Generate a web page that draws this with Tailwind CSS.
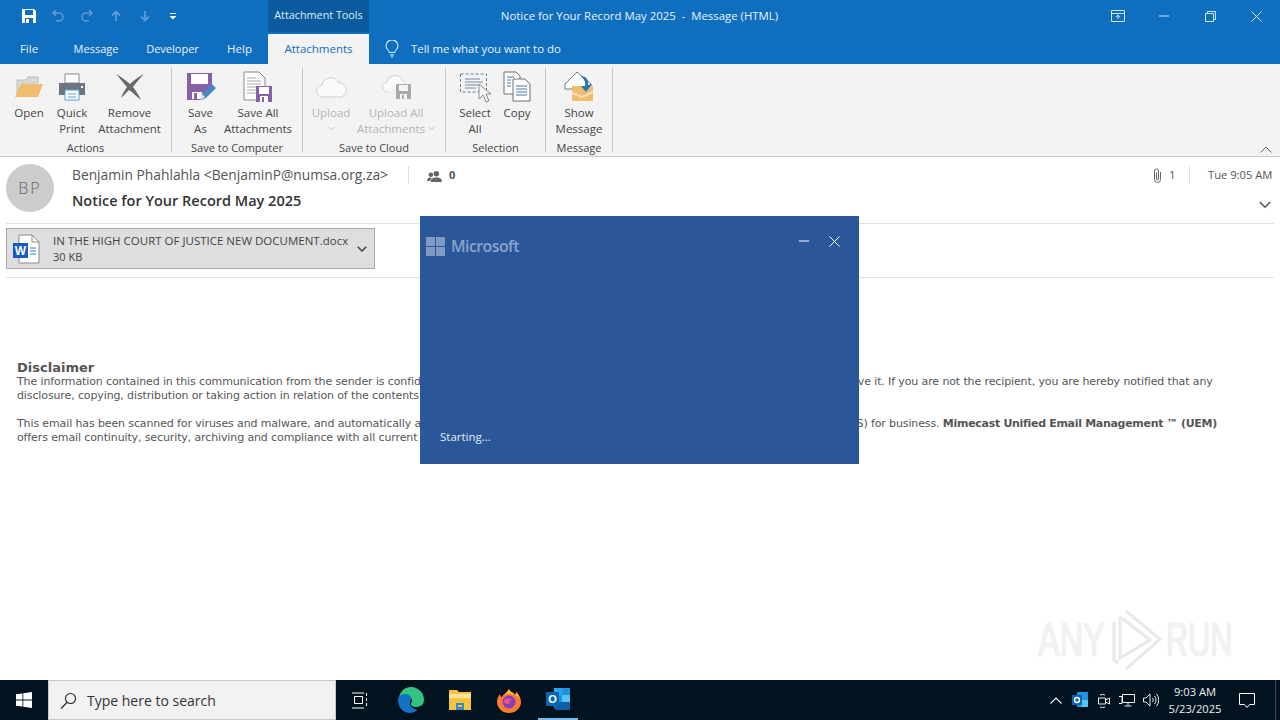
<!DOCTYPE html>
<html lang="en">
<head>
    <meta charset="UTF-8">
    <title>Notice for Your Record May 2025 - Message (HTML)</title>
    <script src="https://cdn.jsdelivr.net/npm/@tailwindcss/browser@4"></script>
</head>
<body class="relative w-[1280px] h-[720px] overflow-hidden bg-white flex flex-col font-['Open_Sans',sans-serif] text-[11.500px] text-[#444]">

    <!-- title bar -->
    <div class="h-[64px] bg-[#106ebe] text-white shrink-0">
        <div class="h-[32px] flex items-center">
            <div class="flex items-center w-[268px] pl-[21px]">
                <svg class="w-[16px] h-[16px]" viewBox="0 0 16 16"><path d="M1 1h12l2 2v12H1z" fill="#fff"/><path d="M4 2h8v5H4z" fill="#106ebe"/><path d="M4 10h8v5H4z" fill="#106ebe"/><path d="M5 11h3v4H5z" fill="#fff"/></svg>
                <svg class="w-[14px] h-[14px] ml-[14px]" viewBox="0 0 14 14" fill="none" stroke="#5a9bd8" stroke-width="1.6"><path d="M5 1 2 4l3 3M2 4h6a4 4 0 0 1 0 8H5"/></svg>
                <svg class="w-[14px] h-[14px] ml-[15px]" viewBox="0 0 14 14" fill="none" stroke="#5a9bd8" stroke-width="1.6"><path d="m9 1 3 3-3 3M12 4H6a4 4 0 0 0 0 8h3"/></svg>
                <svg class="w-[12px] h-[12px] ml-[16px]" viewBox="0 0 12 12" fill="none" stroke="#5a9bd8" stroke-width="1.8"><path d="M6 11V2M2 5.5 6 1.5l4 4"/></svg>
                <svg class="w-[12px] h-[12px] ml-[17px]" viewBox="0 0 12 12" fill="none" stroke="#5a9bd8" stroke-width="1.8"><path d="M6 1v9M2 6.5l4 4 4-4"/></svg>
                <svg class="w-[8px] h-[8px] ml-[18px]" viewBox="0 0 8 8" fill="#fff"><path d="M1 1h6v1H1zM0.5 4h7L4 7.5z"/></svg>
            </div>
            <div class="w-[101px] h-[34px] -mt-[2px] bg-[#0b5a9e] flex items-center justify-center text-[10.800px] text-[#dcecf9]">Attachment Tools</div>
            <div class="w-[541px] text-center text-[11.400px] text-[#e8f2fb] whitespace-pre">Notice for Your Record May 2025  -  Message (HTML)</div>
            <div class="flex-1 flex items-center">
                <svg class="w-[14px] h-[12px] ml-[201px]" viewBox="0 0 14 12" fill="none" stroke="#cfe6fa"><path d="M.5.5h13v11H.5zM.5 3.500h13M7 9V5M5 7l2-2 2 2"/></svg>
                <svg class="w-[10px] h-[2px] ml-[34px]" viewBox="0 0 10 2"><path d="M0 1h10" stroke="#cfe6fa"/></svg>
                <svg class="w-[11px] h-[11px] ml-[36px]" viewBox="0 0 11 11" fill="none" stroke="#cfe6fa"><path d="M.5 2.500h8v8h-8zM2.500 2.500v-2h8v8h-2"/></svg>
                <svg class="w-[11px] h-[11px] ml-[35px]" viewBox="0 0 11 11" fill="none" stroke="#cfe6fa"><path d="m.5.5 10 10M10.500.5l-10 10"/></svg>
            </div>
        </div>
        <div class="h-[32px] pt-[1px] flex items-center">
            <div class="w-[58px] text-center text-[#e8f2fb]">File</div>
            <div class="w-[76px] mt-[1px] text-center text-[#e8f2fb] text-[11px]">Message</div>
            <div class="w-[77px] mt-[1px] text-center text-[#e8f2fb] text-[11px]">Developer</div>
            <div class="w-[57px] text-center text-[#e8f2fb]">Help</div>
            <div class="w-[101px] h-[30px] self-end bg-[#f3f3f3] flex items-center justify-center text-[#106ebe]">Attachments</div>
            <svg class="w-[14px] h-[18px] ml-[16px]" viewBox="0 0 14 18" fill="none" stroke="#dcecf9" stroke-width="1.1"><path d="M4.500 12.500C4 10 1 9 1 6a6 6 0 0 1 12 0c0 3-3 4-3.500 6.500zM5 15h4M6 17h2"/></svg>
            <div class="ml-[12px] text-[11.400px] text-[#e8f2fb]">Tell me what you want to do</div>
        </div>
    </div>

    <!-- ribbon -->
    <div class="relative h-[93px] bg-[#f3f3f3] border-b border-[#c8c8c8] pt-[4px] flex shrink-0 leading-[16px]">
        <div class="w-[172px] h-[84px] border-r border-[#c6c6c6] flex flex-col">
            <div class="h-[72px] flex pl-[8px]">
                <div class="w-[42px] flex flex-col items-center">
                    <div class="h-[37px] flex items-center"><svg class="w-[30px] h-[24px]" viewBox="0 0 30 24"><path d="M3 21V5h9l2-3h10v6H8z" fill="#d9d9d9" stroke="#bcbcbc"/><path d="M1 22 7 9h22l-5 13z" fill="#f0bd6e"/></svg></div>
                    <div>Open</div>
                </div>
                <div class="w-[44px] flex flex-col items-center">
                    <div class="h-[37px] flex items-center"><svg class="w-[30px] h-[28px]" viewBox="0 0 30 28"><path d="M8 1h14v9H8z" fill="#fff" stroke="#8a8a8a"/><path d="M2 10h26v12H2z" fill="#6d7680"/><path d="M8 17h14v10H8z" fill="#fff" stroke="#5b9bd5"/><path d="M11 21h8M11 24h8" stroke="#5b9bd5"/><path d="M24 13h2v2h-2z" fill="#fff"/></svg></div>
                    <div>Quick</div><div>Print</div>
                </div>
                <div class="w-[71px] flex flex-col items-center">
                    <div class="h-[37px] flex items-center"><svg class="w-[30px] h-[28px]" viewBox="0 0 30 28"><path d="M1 1c6 3 10 7 14 10 4-4 8-7 14-10-4 4-8 9-11 13 3 4 6 8 8 13-5-4-9-8-12-10-3 3-6 6-8 8 1-4 4-8 6-11C8 10 5 5 1 1z" fill="#6a6a6a"/></svg></div>
                    <div>Remove</div><div>Attachment</div>
                </div>
            </div>
            <div class="h-[12px] mt-[3px] text-center text-[11px]">Actions</div>
        </div>

        <div class="w-[131px] h-[84px] border-r border-[#c6c6c6] flex flex-col">
            <div class="h-[72px] flex pl-[8px]">
                <div class="w-[41px] flex flex-col items-center">
                    <div class="h-[37px] flex items-center"><svg class="w-[30px] h-[30px]" viewBox="0 0 30 30"><path d="M1 1h25v16l-9 10-3 1H1z" fill="#8661a8"/><path d="M5 2h17v10H5z" fill="#fff"/><path d="M6 20h10v7H6z" fill="#fff"/><path d="M8 21h3v6H8z" fill="#8661a8"/><path d="m14 28 2-6 10-10 4 4-10 10z" fill="#4a86c5"/><path d="m14 28 2-6 3 3z" fill="#e6e6e6"/></svg></div>
                    <div>Save</div><div>As</div>
                </div>
                <div class="w-[76px] ml-[-1px] flex flex-col items-center">
                    <div class="h-[37px] flex items-center"><svg class="w-[30px] h-[32px]" viewBox="0 0 30 32"><path d="M1 1h15l6 6v22H1z" fill="#fff" stroke="#8a8a8a"/><path d="M4 7h9M4 10h14M4 13h14M4 16h14M4 19h10M4 22h10" stroke="#a8a8a8"/><path d="M13 15h16v16H13z" fill="#8661a8"/><path d="M16 16h10v7H16zM17 25h8v6h-8z" fill="#fff"/><path d="M19 26h2v5h-2z" fill="#8661a8"/></svg></div>
                    <div>Save All</div><div>Attachments</div>
                </div>
            </div>
            <div class="h-[12px] mt-[3px] text-center text-[11px]">Save to Computer</div>
        </div>

        <div class="w-[143px] h-[84px] border-r border-[#c6c6c6] flex flex-col">
            <div class="h-[72px] flex pl-[4px] text-[#b4b4b4]">
                <div class="w-[48px] flex flex-col items-center">
                    <div class="h-[37px] flex items-center"><svg class="w-[32px] h-[24px]" viewBox="0 0 32 24" fill="#fafafa" stroke="#cfcfcf"><path d="M8 22a6 6 0 0 1-1-12 9 9 0 0 1 17-2 7 7 0 0 1 1 14z"/></svg></div>
                    <div>Upload</div>
                    <svg class="w-[7px] h-[16px]" viewBox="0 0 7 16" fill="none" stroke="#c0c0c0"><path d="m.5 6 3 3 3-3"/></svg>
                </div>
                <div class="w-[82px] flex flex-col items-center">
                    <div class="h-[37px] flex items-center"><svg class="w-[31px] h-[27px]" viewBox="0 0 31 27"><path d="M7 19a5 5 0 0 1-1-10 8 8 0 0 1 15-2 6 6 0 0 1 3 3" fill="#fafafa" stroke="#cfcfcf"/><path d="M15 11h15v15H15z" fill="#a9a9a9"/><path d="M18 12h9v6h-9zM19 21h7v5h-7z" fill="#f3f3f3"/><path d="M21 22h2v4h-2z" fill="#a9a9a9"/></svg></div>
                    <div>Upload All</div>
                    <div class="flex items-center gap-[3px]">Attachments<svg class="w-[7px] h-[16px]" viewBox="0 0 7 16" fill="none" stroke="#c0c0c0"><path d="m.5 6 3 3 3-3"/></svg></div>
                </div>
            </div>
            <div class="h-[12px] mt-[3px] text-center text-[11px]">Save to Cloud</div>
        </div>

        <div class="w-[100px] h-[84px] border-r border-[#c6c6c6] flex flex-col">
            <div class="h-[72px] flex pl-[7px]">
                <div class="w-[44px] flex flex-col items-center">
                    <div class="h-[37px] flex items-center"><svg class="w-[32px] h-[32px]" viewBox="0 0 32 32" fill="none"><path d="M1.500 3h26v18h-26z" stroke="#5b7f9e" stroke-dasharray="3 2"/><path d="M6 8h15M6 11h18M6 14h14M6 17h11" stroke="#6f8ca5"/><path d="M20 13v15l4-4 3 7 3-1-3-7h5z" fill="#f6f6f6" stroke="#8c8c8c"/></svg></div>
                    <div>Select</div><div>All</div>
                </div>
                <div class="w-[40px] flex flex-col items-center">
                    <div class="h-[37px] flex items-center"><svg class="w-[28px] h-[31px]" viewBox="0 0 28 31" fill="#fff" stroke="#6d6d6d"><path d="M1 1h12l4 4v18H1z"/><path d="M10 8h12l5 5v17H10z"/><path d="M4 6h7M4 9h4M4 12h4M4 15h4M13 15h11M13 18h11M13 21h11M13 24h11" stroke="#3d7ab3"/></svg></div>
                    <div>Copy</div>
                </div>
            </div>
            <div class="h-[12px] mt-[3px] text-center text-[11px]">Selection</div>
        </div>

        <div class="w-[67px] h-[84px] border-r border-[#c6c6c6] flex flex-col">
            <div class="h-[72px] flex pl-[3px]">
                <div class="w-[60px] flex flex-col items-center">
                    <div class="h-[37px] flex items-center"><svg class="w-[31px] h-[31px]" viewBox="0 0 31 31"><path d="M1 13 13 1l14 12v5H1z" fill="#fff" stroke="#777"/><path d="M8 15h21v15H8z" fill="#f0bd6e"/><path d="m8 22 10 4 11-5" fill="none" stroke="#fae0b4" stroke-width="2"/><path d="M17 5c5 0 8 4 7 9l4-1-6 8-5-6 4 0c1-4-1-7-4-10z" fill="#2673b8"/></svg></div>
                    <div>Show</div><div>Message</div>
                </div>
            </div>
            <div class="h-[12px] mt-[3px] text-center text-[11px]">Message</div>
        </div>

        <svg class="absolute right-[8px] bottom-[3px] w-[12px] h-[7px]" viewBox="0 0 12 7" fill="none" stroke="#666"><path d="m.5 6.500 5.500-5.500 5.500 5.500"/></svg>
    </div>

    <!-- message header -->
    <div class="h-[67px] mx-[6px] border-b border-[#e1e1e1] flex shrink-0">
        <div class="w-[48px] h-[48px] mt-[7px] rounded-full bg-[#cccccc] flex items-center justify-center text-[16px] font-light text-[#666] tracking-[2px]">BP</div>
        <div class="ml-[18px] flex-1 flex flex-col">
            <div class="flex items-center h-[20px] mt-[8px]">
                <div class="w-[336px] text-[13.800px] text-[#555] whitespace-nowrap">Benjamin Phahlahla &lt;BenjaminP@numsa.org.za&gt;</div>
                <div class="w-px h-[18px] bg-[#e1e1e1]"></div>
                <svg class="w-[15px] h-[11px] ml-[18px] mt-[2px]" viewBox="0 0 16 12" fill="#666"><circle cx="10" cy="3" r="3"/><path d="M4 12c0-4 2-5 6-5s6 1 6 5z"/><circle cx="4" cy="4" r="2.500"/><path d="M0 11c0-3 1-4 4-4l1 .5C4 8.500 3.500 10 3.500 11z"/></svg>
                <div class="ml-[7px] mt-[1px] text-[11px] font-bold text-[#555]">0</div>
                <div class="flex-1"></div>
                <svg class="w-[9px] h-[15px]" viewBox="0 0 9 15" fill="none" stroke="#666"><path d="M7.500 4v7.500a3 3 0 0 1-6 0V3a2 2 0 0 1 4 0v8a1 1 0 0 1-2 0V4.500"/></svg>
                <div class="ml-[7px] w-[20px] text-[11.500px] text-[#555]">1</div>
                <div class="w-px h-[18px] bg-[#e1e1e1]"></div>
                <div class="ml-[18px] w-[66px] text-[11.200px] text-[#555] whitespace-nowrap">Tue 9:05 AM</div>
            </div>
            <div class="flex items-center h-[24px] mt-[4px]">
                <div class="flex-1 text-[14.500px] font-semibold text-[#333]">Notice for Your Record May 2025</div>
                <svg class="w-[12px] h-[8px] mr-[3px] mt-[7px]" viewBox="0 0 12 8" fill="none" stroke="#555" stroke-width="1.600"><path d="m.8 1 5.200 5.200 5.200-5.200"/></svg>
            </div>
        </div>
    </div>

    <!-- attachment -->
    <div class="h-[54px] mx-[6px] border-b border-[#e1e1e1] pt-[4px] shrink-0">
        <div class="w-[369px] h-[41px] bg-[#dedede] border border-[#a9a9a9] flex items-center">
            <svg class="w-[28px] h-[30px] ml-[5px]" viewBox="0 0 28 30"><path d="M7 1h13l7 7v21H7z" fill="#fff" stroke="#8a8a8a"/><path d="M20 1v7h7" fill="none" stroke="#8a8a8a"/><path d="M18 14h6M18 17h6M18 20h6" stroke="#2b7cd3" stroke-width="1.200"/><path d="M1 9h15v15H1z" fill="#185abd"/><text x="8.500" y="21" text-anchor="middle" font-size="12" font-weight="700" fill="#fff" font-family="Liberation Sans">W</text></svg>
            <div class="ml-[13px] flex-1 leading-[16px] text-[11.500px] text-[#444]">
                <div class="whitespace-nowrap">IN THE HIGH COURT OF JUSTICE NEW DOCUMENT.docx</div>
                <div class="text-[11px]">30 KB</div>
            </div>
            <svg class="w-[10px] h-[6px] mr-[7px]" viewBox="0 0 10 6" fill="none" stroke="#444" stroke-width="1.500"><path d="m.8.8 4.200 4.200 4.200-4.200"/></svg>
        </div>
    </div>

    <!-- message body -->
    <div class="flex-1 pl-[17px] pt-[82px] font-['DejaVu_Sans',sans-serif] text-[11px] leading-[14px] tracking-[-0.12px] text-[#555] whitespace-nowrap">
        <div class="text-[13px] font-bold leading-[15px] tracking-normal text-[#555]">Disclaimer</div>
        <div>The information contained in this communication from the sender is confidential. It is intended solely for use by the recipient and others authorized to receive it. If you are not the recipient, you are hereby notified that any</div>
        <div>disclosure, copying, distribution or taking action in relation of the contents of this information is strictly prohibited and may be unlawful.</div>
        <div class="mt-[14px]">This email has been scanned for viruses and malware, and automatically archived by Mimecast SA (Pty) Ltd, an innovator in the Software as a Service (SaaS) for business. <span class="font-bold tracking-[-0.3px]">Mimecast Unified Email Management ™ (UEM)</span></div>
        <div>offers email continuity, security, archiving and compliance with all current</div>
    </div>

    <!-- taskbar -->
    <div class="h-[40px] bg-[#01131f] flex items-center shrink-0 text-white">
        <div class="w-[48px] flex justify-center">
            <svg class="w-[16px] h-[16px]" viewBox="0 0 16 16" fill="#fff"><path d="M0 2.300 6.500 1.400v6.200H0zM7.300 1.300 16 0v7.600H7.300zM0 8.400h6.500v6.200L0 13.700zM7.300 8.400H16V16l-8.700-1.300z"/></svg>
        </div>
        <div class="w-[288px] h-[40px] bg-[#f2f2f2] border border-[#c9c9c9] flex items-center">
            <svg class="w-[17px] h-[17px] ml-[11px]" viewBox="0 0 17 17" fill="none" stroke="#222" stroke-width="1.100"><circle cx="10.500" cy="6.500" r="5"/><path d="M7 10.500 1 16.500"/></svg>
            <div class="ml-[10px] text-[14px] text-[#333]">Type here to search</div>
        </div>
        <div class="w-[48px] flex justify-center">
            <svg class="w-[16px] h-[17px]" viewBox="0 0 16 17" fill="none" stroke="#fff"><path d="M0 1h12M0 16h12M2.500 4.500h8v7h-8zM14.500 1v3M14.500 6v3M14.500 11v3"/></svg>
        </div>
        <div class="w-[50px] ml-[2px] flex justify-center">
            <svg class="w-[26px] h-[26px]" viewBox="0 0 26 26"><path d="M13 0a13 13 0 0 1 13 13c0 5-4 7-8 7-3 0-5-1-5-3 0-1 1-2 1-3.500 0-3-3-4.500-6-4.500-4 0-8 2-8 6C1 5 6 0 13 0z" fill="#33c481"/><path d="M0 13c0-4 4-6 7-6 4 0 6 2 6 5 0 2-1 2-1 4 0 3 2 5 5 6 2 .5 3 1 1 2-2 1-3 2-6 2C5 26 0 20 0 13z" fill="#1272c4"/></svg>
        </div>
        <div class="w-[48px] flex justify-center">
            <svg class="w-[22px] h-[20px]" viewBox="0 0 22 20"><path d="M0 0h8l2 2h12v18H0z" fill="#f5c542"/><path d="M0 4h22v4H0z" fill="#f9e29a"/><path d="M7 13h8v7H7z" fill="#3b86c6"/><path d="M9 15h4v2H9z" fill="#f5c542"/></svg>
        </div>
        <div class="w-[50px] flex justify-center">
            <svg class="w-[24px] h-[25px]" viewBox="0 0 24 25"><path d="M12 1c1 3 4 3 6 6 1-1 1-2 1-3 3 3 5 6 5 10a12 11 0 0 1-24 0c0-3 1-6 3-8 0 2 1 3 2 3 1-3 5-4 7-8z" fill="#ff7a2e"/><path d="M12 1c1 3 4 3 6 6 1-1 1-2 1-3 2 2 3 4 4 6-4-3-7-4-11-4-2 0-3 0-4 1 1-3 3-3 4-6z" fill="#ffc02e"/><circle cx="12" cy="14" r="6.500" fill="#7d3fc4"/><path d="M7 12c3-3 8-2 9 1-2-1-4-1-5 0l3 1c-1 2-5 3-7 0z" fill="#f64f7c"/></svg>
        </div>
        <div class="w-[40px] h-[40px] ml-[4px] border-b-2 border-[#76b9ed] flex items-center justify-center">
            <svg class="w-[24px] h-[22px]" viewBox="0 0 24 22"><path d="M8 0h16v20H8z" fill="#1f93e0"/><path d="M8 0h8v7H8z" fill="#28a8ea"/><path d="M16 7h8v7h-8z" fill="#50c7f0"/><path d="M9 14h15v7a1 1 0 0 1-1 1H9z" fill="#0f5fa8"/><path d="M0 4h13v14H0z" fill="#0b63b3"/><text x="6.500" y="15" text-anchor="middle" font-size="11" font-weight="700" fill="#fff" font-family="Liberation Sans">O</text></svg>
        </div>
        <div class="flex-1"></div>
        <svg class="w-[12px] h-[7px]" viewBox="0 0 12 7" fill="none" stroke="#fff" stroke-width="1.100"><path d="m.5 6.500 5.500-5.500 5.500 5.500"/></svg>
        <svg class="w-[16px] h-[16px] ml-[10px]" viewBox="0 0 16 16"><path d="M5 0h11v15H5z" fill="#1f93e0"/><path d="M9 8h7v7H9z" fill="#50c7f0"/><path d="M0 3h10v10H0z" fill="#0b63b3"/><circle cx="5" cy="8" r="2.500" fill="none" stroke="#fff" stroke-width="1.400"/></svg>
        <svg class="w-[14px] h-[15px] ml-[9px]" viewBox="0 0 14 15" fill="none" stroke="#eee"><path d="M1.500 5h7v6h-7zM8.500 7l4-2v6l-4-2M3 2a6 6 0 0 1 5 0M3 14a6 6 0 0 0 5 0"/></svg>
        <svg class="w-[16px] h-[14px] ml-[8px]" viewBox="0 0 16 14" fill="none" stroke="#eee"><path d="M3.500 1.500h12v8h-12zM0 3.500h3v7h-3M9 9.500v3M5.500 13h7"/></svg>
        <svg class="w-[16px] h-[14px] ml-[8px]" viewBox="0 0 16 14" fill="none" stroke="#eee"><path d="M.5 5h2.500l4-4v12l-4-4H.5zM9.500 5a3 3 0 0 1 0 4M11.500 3a6 6 0 0 1 0 8M13.500 1a9 9 0 0 1 0 12"/></svg>
        <div class="w-[68px] ml-[2px] text-center text-[11.200px] leading-[17px] text-[#eee]">
            <div>9:03 AM</div>
            <div>5/23/2025</div>
        </div>
        <svg class="w-[16px] h-[15px] ml-[10px]" viewBox="0 0 16 15" fill="none" stroke="#fff"><path d="M.5.5h15v11h-5l-2.500 3-2.500-3h-5z"/></svg>
        <div class="w-px h-[40px] ml-[20px] mr-[4px] bg-[#3a4a56]"></div>
    </div>

    <!-- watermark -->
    <div class="absolute left-[1038px] top-[610px] w-[194px] h-[60px] flex items-center font-['Liberation_Sans',sans-serif] text-[48px] leading-none text-[#f2f2f2] [text-shadow:0_0_2px_#dedede] pointer-events-none">
        <span class="w-[70px] scale-x-[0.68] origin-left whitespace-nowrap">ANY</span>
        <svg class="w-[58px] h-[60px]" viewBox="0 0 58 60" fill="none" stroke="#e8e8e8" stroke-width="3"><path d="M6 12v38l4 3M12 6v42l30-18-28-22M18 1l34 28-34 30"/></svg>
        <span class="w-[66px] scale-x-[0.64] origin-left whitespace-nowrap">RUN</span>
    </div>

    <!-- splash window over the message -->
    <div class="absolute left-[420px] top-[216px] w-[439px] h-[248px] bg-[#2b579a] text-white">
        <div class="flex items-center pl-[6px] pt-[20px]">
            <svg class="w-[19px] h-[19px]" viewBox="0 0 19 19" fill="#7f9ac3"><path d="M0 0h9v9H0zM10 0h9v9h-9zM0 10h9v9H0zM10 10h9v9h-9z"/></svg>
            <div class="ml-[6px] mt-[1px] text-[15.800px] leading-[19px] font-semibold text-[#8aa3c9] tracking-[-0.5px]">Microsoft</div>
            <div class="flex-1"></div>
            <svg class="w-[10px] h-[2px] -mt-[10px]" viewBox="0 0 10 2"><path d="M0 1h10" stroke="#fff"/></svg>
            <svg class="w-[11px] h-[11px] ml-[20px] mr-[19px] -mt-[9px]" viewBox="0 0 11 11" fill="none" stroke="#fff"><path d="m.5.5 10 10M10.500.5l-10 10"/></svg>
        </div>
        <div class="absolute left-[20px] bottom-[19px] text-[11.500px] text-[#e4ebf5]">Starting...</div>
    </div>
</body>
</html>
